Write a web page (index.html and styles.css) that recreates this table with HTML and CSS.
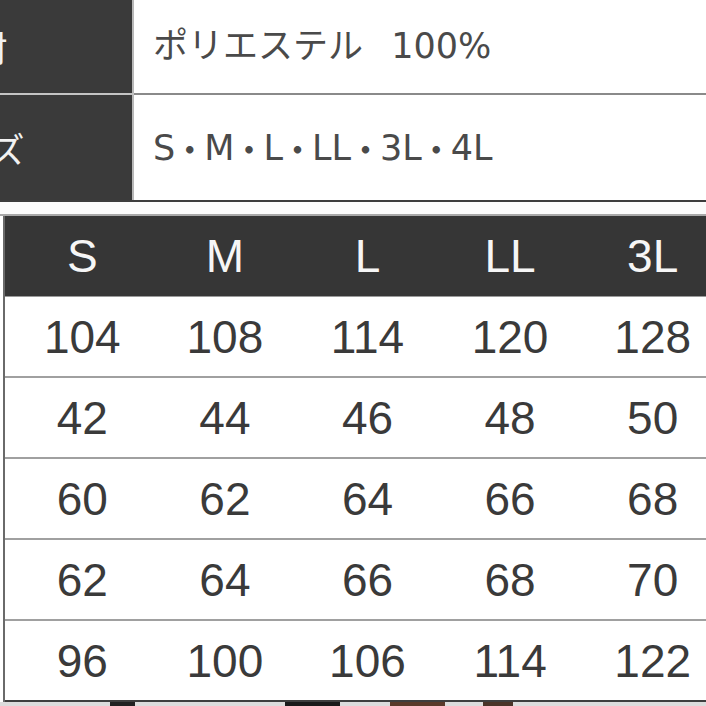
FILE: index.html
```html
<!DOCTYPE html>
<html lang="ja">
<head>
<meta charset="utf-8">
<link rel="stylesheet" href="styles.css">
</head>
<body>
<div class="page">
  <div class="spec">
    <div class="spec-row spec-row-1">
      <div class="spec-label">素材</div>
      <div class="spec-value wide-space">ポリエステル 100%</div>
    </div>
    <div class="spec-row spec-row-2">
      <div class="spec-label">サイズ</div>
      <div class="spec-value">S<span class="dot">・</span>M<span class="dot">・</span>L<span class="dot">・</span>LL<span class="dot">・</span>3L<span class="dot">・</span>4L</div>
    </div>
  </div>
  <div class="gap"></div>
  <div class="size-table">
    <div class="tr head">
      <div class="td">S</div><div class="td">M</div><div class="td">L</div><div class="td">LL</div><div class="td">3L</div><div class="td">4L</div>
    </div>
    <div class="tr">
      <div class="td">104</div><div class="td">108</div><div class="td">114</div><div class="td">120</div><div class="td">128</div><div class="td">136</div>
    </div>
    <div class="tr">
      <div class="td">42</div><div class="td">44</div><div class="td">46</div><div class="td">48</div><div class="td">50</div><div class="td">52</div>
    </div>
    <div class="tr">
      <div class="td">60</div><div class="td">62</div><div class="td">64</div><div class="td">66</div><div class="td">68</div><div class="td">70</div>
    </div>
    <div class="tr">
      <div class="td">62</div><div class="td">64</div><div class="td">66</div><div class="td">68</div><div class="td">70</div><div class="td">72</div>
    </div>
    <div class="tr last">
      <div class="td">96</div><div class="td">100</div><div class="td">106</div><div class="td">114</div><div class="td">122</div><div class="td">130</div>
    </div>
  </div>
  <div class="strip">
    <span class="blob b1"></span>
    <span class="blob b2"></span>
    <span class="blob b3"></span>
    <span class="blob b4"></span>
  </div>
</div>
</body>
</html>
```

FILE: styles.css
```css
html, body {
  margin: 0;
  padding: 0;
  background: #ffffff;
}
body {
  width: 706px;
  height: 706px;
  overflow: hidden;
}
.page {
  width: 706px;
  height: 706px;
  overflow: hidden;
  display: flex;
  flex-direction: column;
}

/* top spec table */
.spec {
  margin-left: -187px;
  display: flex;
  flex-direction: column;
  border-bottom: 2px solid #3c3c3c;
  font-family: "DejaVu Sans", "Noto Sans CJK JP", sans-serif;
  font-size: 35px;
}
.spec-row {
  display: flex;
  flex-shrink: 0;
}
.spec-row-1 {
  height: 93px;
  border-bottom: 2px solid #8a8a8a;
}
.spec-row-2 {
  height: 105px;
}
.spec-label {
  width: 319px;
  flex-shrink: 0;
  background: #3a3a3a;
  color: #f2f2f2;
  display: flex;
  align-items: center;
  justify-content: center;
  border-right: 2px solid #b8b8b8;
  font-family: "Noto Sans CJK JP", sans-serif;
}
.spec-row-1 .spec-label {
  box-shadow: 0 2px 0 #c4c4c4;
}
.spec-value {
  flex: 1;
  display: flex;
  align-items: center;
  padding-left: 19px;
  color: #4a4a4a;
  white-space: pre;
}
.spec-row-1 .spec-value {
  padding-bottom: 9px;
}
.wide-space {
  word-spacing: 17px;
}
.dot {
  font-family: "Noto Sans CJK JP", sans-serif;
  font-size: 29px;
  font-weight: 700;
}

.gap {
  height: 12px;
  flex-shrink: 0;
  background: #fbfbfb;
  border-bottom: 2px solid #a8a8a8;
}

/* size table */
.size-table {
  margin-left: 3px;
  border-left: 2px solid #6a6a6a;
  display: flex;
  flex-direction: column;
  font-family: "Liberation Sans", Arial, sans-serif;
  font-size: 46px;
  color: #3a3a3a;
  flex-shrink: 0;
}
.tr {
  display: flex;
  height: 79px;
  border-bottom: 2px solid #a0a0a0;
  padding-left: 6px;
  align-items: center;
  flex-shrink: 0;
}
.tr.head {
  height: 80px;
  border-bottom: 1px solid #9a9a9a;
  background: #363636;
  color: #f6f6f6;
}
.tr.last {
  border-bottom: 2px solid #3e3e3e;
}
.td {
  width: 142.6px;
  flex-shrink: 0;
  text-align: center;
  line-height: 1;
}

.strip {
  flex: 1;
  background: #dcdcdc;
  display: flex;
  align-items: flex-end;
}
.blob {
  display: block;
  height: 4px;
}
.b1 { margin-left: 110px; width: 25px; background: #222; }
.b2 { margin-left: 150px; width: 55px; background: #1a1a1a; }
.b3 { margin-left: 50px; width: 55px; background: #5a3a2a; }
.b4 { margin-left: 38px; width: 30px; background: #4a3428; }
```
